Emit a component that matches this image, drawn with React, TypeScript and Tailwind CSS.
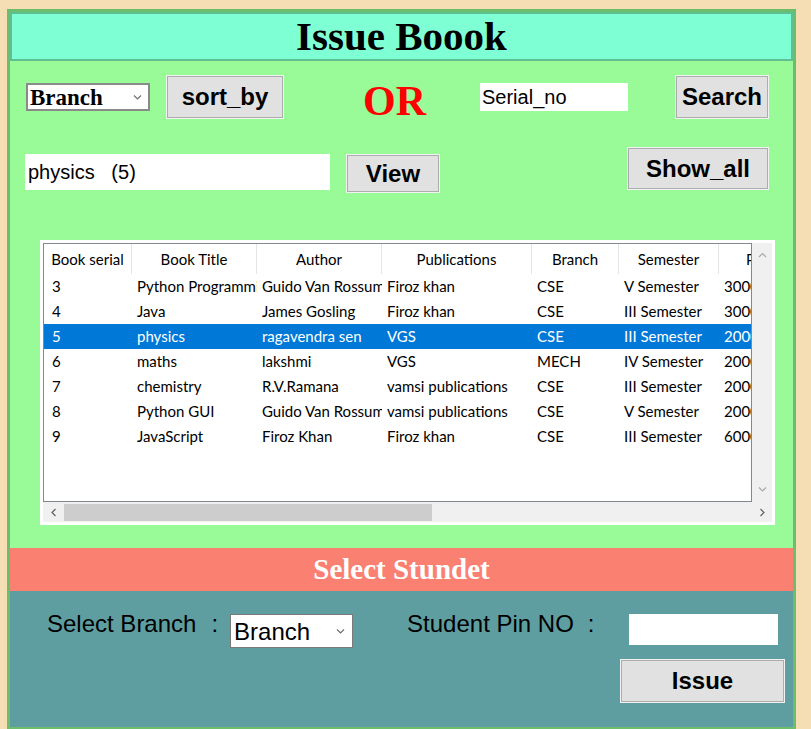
import React from 'react';

const COLUMNS = [
  { title: 'Book serial', width: 88, pad: 8 },
  { title: 'Book Title', width: 125, pad: 5 },
  { title: 'Author', width: 125, pad: 5 },
  { title: 'Publications', width: 150, pad: 5 },
  { title: 'Branch', width: 87, pad: 5 },
  { title: 'Semester', width: 100, pad: 5 },
  { title: 'Price', width: 88, pad: 5 },
];

const ROWS = [
  ['3', 'Python Programming', 'Guido Van Rossum', 'Firoz khan', 'CSE', 'V Semester', '3000'],
  ['4', 'Java', 'James Gosling', 'Firoz khan', 'CSE', 'III Semester', '3000'],
  ['5', 'physics', 'ragavendra sen', 'VGS', 'CSE', 'III Semester', '2000'],
  ['6', 'maths', 'lakshmi', 'VGS', 'MECH', 'IV Semester', '2000'],
  ['7', 'chemistry', 'R.V.Ramana', 'vamsi publications', 'CSE', 'III Semester', '2000'],
  ['8', 'Python GUI', 'Guido Van Rossum', 'vamsi publications', 'CSE', 'V Semester', '2000'],
  ['9', 'JavaScript', 'Firoz Khan', 'Firoz khan', 'CSE', 'III Semester', '6000'],
];

const SELECTED = 2;

const Chevron = ({ dir, color }: { dir: 'up' | 'down' | 'left' | 'right'; color: string }) => {
  const d = {
    up: 'M1 5 L4.5 1.5 L8 5',
    down: 'M1 1.5 L4.5 5 L8 1.5',
    left: 'M5.5 1 L2 4.5 L5.5 8',
    right: 'M2.5 1 L6 4.5 L2.5 8',
  }[dir];
  const horizontal = dir === 'left' || dir === 'right';
  return (
    <svg
      width={horizontal ? 8 : 9}
      height={horizontal ? 9 : 7}
      viewBox={horizontal ? '0 0 8 9' : '0 0 9 7'}
      fill="none"
      stroke={color}
      strokeWidth={1.2}
    >
      <path d={d} />
    </svg>
  );
};

const TkButton = ({ label, className }: { label: string; className: string }) => (
  <button
    type="button"
    className={`flex items-center justify-center bg-[#e1e1e1] border border-[#adadad] shadow-[0_0_0_1px_#f2f2f2] font-['Liberation_Sans',Arial,sans-serif] font-bold text-[24px] text-black ${className}`}
  >
    {label}
  </button>
);

const BookTable = () => (
  <div className="ml-[30px] mt-[48px] w-[735px] h-[285px] bg-white p-[3px] flex flex-col">
    <div className="flex h-[259px]">
      <div className="w-[709px] border border-[#828790] overflow-hidden font-['Lato',sans-serif] text-[15px] text-black">
        <div className="flex h-[30px] bg-white">
          {COLUMNS.map((c) => (
            <div
              key={c.title}
              style={{ width: c.width, minWidth: c.width }}
              className="flex items-center justify-center border-r border-[#e5e5e5] whitespace-nowrap overflow-hidden"
            >
              {c.title}
            </div>
          ))}
        </div>
        {ROWS.map((r, i) => (
          <div
            key={r[0]}
            className={`flex h-[25px] items-center ${i === SELECTED ? 'bg-[#0078d7] text-white' : ''}`}
          >
            {r.map((v, j) => (
              <div
                key={j}
                style={{ width: COLUMNS[j].width, minWidth: COLUMNS[j].width, paddingLeft: COLUMNS[j].pad }}
                className="whitespace-nowrap overflow-hidden"
              >
                {v}
              </div>
            ))}
          </div>
        ))}
      </div>
      <div className="w-[20px] bg-[#f0f0f0] flex flex-col items-center justify-between py-[9px]">
        <Chevron dir="up" color="#a8a8a8" />
        <Chevron dir="down" color="#a8a8a8" />
      </div>
    </div>
    <div className="h-[20px] bg-[#f0f0f0] flex items-center">
      <div className="w-[21px] flex justify-center">
        <Chevron dir="left" color="#606060" />
      </div>
      <div className="w-[368px] h-[17px] bg-[#cdcdcd]" />
      <div className="flex-1" />
      <div className="w-[21px] flex justify-center">
        <Chevron dir="right" color="#606060" />
      </div>
    </div>
  </div>
);

export default function App() {
  return (
    <div className="min-h-screen bg-[#f5deb3] pl-[7px] pt-[9px]">
      <div className="w-[789px] border-[3px] border-[#6cbd6c]">
        <div className="h-[49px] bg-[#7fffd4] border-2 border-[#5fbf92] flex items-center justify-center">
          <h1 className="font-['Liberation_Serif','Times_New_Roman',serif] font-bold text-[41px] leading-none text-black">
            Issue Boook
          </h1>
        </div>

        <div className="h-[487px] bg-[#98fb98] pt-[15px] flex flex-col">
          <div className="flex items-center h-[42px]">
            <div className="ml-[16px] w-[124px] h-[28px] bg-white border-2 border-[#8a8a8a] flex items-center justify-between pl-[2px] pr-[6px]">
              <span className="font-['Liberation_Serif','Times_New_Roman',serif] font-bold text-[23px] leading-none">
                Branch
              </span>
              <Chevron dir="down" color="#707070" />
            </div>
            <TkButton label="sort_by" className="ml-[17px] w-[116px] h-[42px]" />
            <div className="ml-[80px] w-[64px] mt-[8px] font-['Liberation_Serif','Times_New_Roman',serif] font-bold text-[42px] leading-none text-[#ff0000]">
              OR
            </div>
            <input
              readOnly
              defaultValue="Serial_no"
              className="ml-[53px] w-[148px] h-[28px] bg-white pl-[2px] outline-none font-['Liberation_Sans',Arial,sans-serif] text-[20px] text-black"
            />
            <TkButton label="Search" className="ml-[48px] w-[92px] h-[42px]" />
          </div>

          <div className="flex items-start mt-[30px] h-[44px]">
            <input
              readOnly
              defaultValue="physics   (5)"
              className="ml-[15px] mt-[6px] w-[305px] h-[36px] bg-white pl-[3px] outline-none font-['Liberation_Sans',Arial,sans-serif] text-[20px] text-black"
            />
            <TkButton label="View" className="ml-[17px] mt-[7px] w-[92px] h-[37px]" />
            <TkButton label="Show_all" className="ml-[189px] w-[140px] h-[41px]" />
          </div>

          <BookTable />
        </div>

        <div className="h-[43px] bg-[#fa8072] flex items-center justify-center">
          <h2 className="font-['Liberation_Serif','Times_New_Roman',serif] font-bold text-[29px] leading-none text-white">
            Select Stundet
          </h2>
        </div>

        <div className="h-[136px] bg-[#5f9ea0] pt-[19px] font-['Liberation_Sans',Arial,sans-serif] text-[24px] text-black">
          <div className="flex items-start">
            <div className="ml-[37px] h-[28px] leading-[28px] whitespace-nowrap">
              Select Branch<span className="ml-[15px]">:</span>
            </div>
            <div className="ml-[12px] mt-[4px] w-[123px] h-[34px] bg-white border border-[#7a7a7a] flex items-end justify-between pl-[3px] pr-[7px] pb-[3px]">
              <span className="leading-none">Branch</span>
              <div className="pb-[9px]">
                <Chevron dir="down" color="#707070" />
              </div>
            </div>
            <div className="ml-[54px] h-[28px] leading-[28px] whitespace-nowrap">
              Student Pin NO<span className="ml-[14px]">:</span>
            </div>
            <input
              readOnly
              className="ml-[34px] mt-[4px] w-[149px] h-[31px] bg-white outline-none"
            />
          </div>
          <div className="flex mt-[12px]">
            <TkButton label="Issue" className="ml-[611px] w-[163px] h-[42px]" />
          </div>
        </div>
      </div>
    </div>
  );
}
